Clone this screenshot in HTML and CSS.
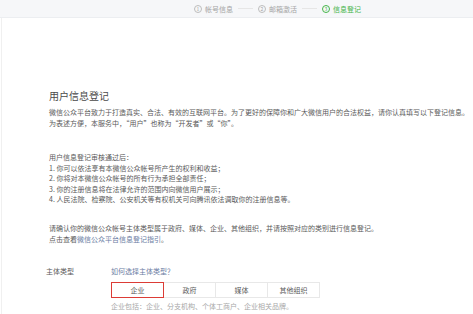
FILE: index.html
```html
<!DOCTYPE html>
<html lang="zh-CN">
<head>
    <meta charset="UTF-8">
    <meta name="viewport" content="width=device-width, initial-scale=1.0">
    <title>信息登记</title>
    <link rel="stylesheet" href="styles.css">
</head>
<body>
    <div class="steps">
        <div class="step"><span class="num">1</span>帐号信息</div>
        <div class="step-line"></div>
        <div class="step"><span class="num">2</span>邮箱激活</div>
        <div class="step-line"></div>
        <div class="step current"><span class="num">3</span>信息登记</div>
    </div>

    <div class="main">
        <h2>用户信息登记</h2>
        <p>微信公众平台致力于打造真实、合法、有效的互联网平台。为了更好的保障你和广大微信用户的合法权益，请你认真填写以下登记信息。<br>为表述方便，本服务中，“用户”也称为“开发者”或“你”。</p>

        <p class="list">
            用户信息登记审核通过后：<br>
            1. 你可以依法享有本微信公众帐号所产生的权利和收益；<br>
            2. 你将对本微信公众帐号的所有行为承担全部责任；<br>
            3. 你的注册信息将在法律允许的范围内向微信用户展示；<br>
            4. 人民法院、检察院、公安机关等有权机关可向腾讯依法调取你的注册信息等。
        </p>

        <p class="confirm">请确认你的微信公众帐号主体类型属于政府、媒体、企业、其他组织，并请按照对应的类别进行信息登记。<br>点击查看<a href="#">微信公众平台信息登记指引</a>。</p>

        <div class="form-row">
            <label class="form-label">主体类型</label>
            <div class="form-field">
                <a href="#">如何选择主体类型？</a>
                <div class="types">
                    <span class="type active">企业</span>
                    <span class="type">政府</span>
                    <span class="type">媒体</span>
                    <span class="type">其他组织</span>
                </div>
                <div class="tips">企业包括：企业、分支机构、个体工商户、企业相关品牌。</div>
            </div>
        </div>
    </div>
</body>
</html>
```

FILE: styles.css
```css
body {
    margin: 0;
    font-family: "Noto Sans CJK SC", "Noto Sans", sans-serif;
    font-size: 7px;
    color: #5a5a5a;
    background-color: #fff;
}
a {
    color: #6b7da3;
    text-decoration: none;
}

/* 顶部步骤条 */
.steps {
    height: 17px;
    display: flex;
    align-items: center;
    padding-left: 194px;
    background-color: #f6f7f9;
    border-bottom: 1px solid #eceef1;
}
.step {
    display: flex;
    align-items: center;
    color: #a5a5a5;
}
.step .num {
    width: 6px;
    height: 6px;
    line-height: 6px;
    margin-right: 3px;
    border: 1px solid #bdbdbd;
    border-radius: 50%;
    font-size: 5px;
    text-align: center;
}
.step.current {
    color: #44b549;
}
.step.current .num {
    border-color: #44b549;
}
.step-line {
    width: 15px;
    height: 1px;
    margin: 0 5px;
    background-color: #e6e6e6;
}

/* 主体内容 */
.main {
    margin-left: 1px;
    padding: 71px 0 20px 47px;
    border-left: 1px solid #f0f0f0;
}
h2 {
    margin: 0 0 4px;
    font-size: 10px;
    font-weight: normal;
    line-height: 14px;
    color: #4a4a4a;
}
p {
    margin: 0;
    line-height: 11px;
}
.list {
    margin-top: 23px;
    line-height: 10.5px;
}
.confirm {
    margin-top: 18px;
}

/* 主体类型 */
.form-row {
    display: flex;
    margin-top: 21px;
    margin-left: -3px;
}
.form-label {
    width: 65px;
    line-height: 11px;
}
.form-field {
    line-height: 11px;
}
.types {
    display: flex;
    margin-top: 5px;
}
.type {
    width: 51px;
    height: 14px;
    line-height: 14px;
    text-align: center;
    border: 1px solid #e8e8e8;
    margin-left: -1px;
    color: #5a5a5a;
}
.type:first-child {
    margin-left: 0;
}
.type.active {
    position: relative;
    border-color: #dc3c36;
    z-index: 1;
}
.tips {
    margin-top: 3px;
    color: #a8a8a8;
}
```
